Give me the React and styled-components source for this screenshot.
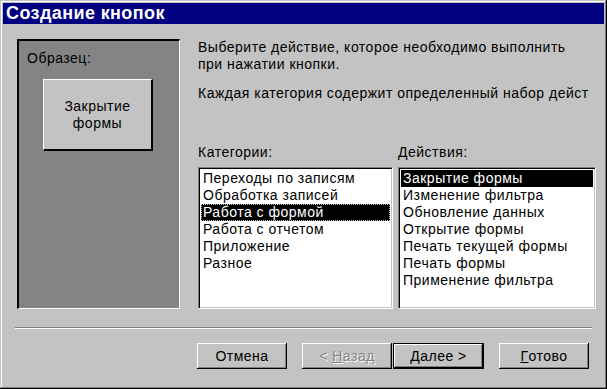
import styled, { createGlobalStyle } from "styled-components";

const Global = createGlobalStyle`
  html, body {
    margin: 0;
    padding: 0;
    background: #c0c0c0;
  }
  body {
    font-family: "Liberation Sans", Arial, sans-serif;
    font-size: 14px;
    color: #000;
  }
`;

const Window = styled.div`
  width: 607px;
  height: 389px;
  box-sizing: border-box;
  background: #c3c3c3;
  padding: 3px;
  letter-spacing: 0.5px;
  box-shadow: inset -1px -1px 0 #000, inset 1px 1px 0 #c3c3c3,
    inset -2px -2px 0 #808080, inset 2px 2px 0 #fff;
  display: flex;
  flex-direction: column;
  overflow: hidden;
`;

const TitleBar = styled.div`
  height: 21px;
  background: #000080;
  color: #fff;
  font-weight: bold;
  font-size: 18px;
  line-height: 21px;
  padding-left: 3px;
  letter-spacing: 0.4px;
`;

const Body = styled.div`
  display: flex;
  padding: 15px 0 0 14px;
`;

const SamplePanel = styled.div`
  width: 163px;
  height: 270px;
  box-sizing: border-box;
  background: #848484;
  border-top: 2px solid #000;
  border-left: 2px solid #000;
  border-right: 1px solid #fff;
  border-bottom: 1px solid #fff;
  padding: 9px 0 0 8px;
  display: flex;
  flex-direction: column;
`;

const SampleButton = styled.div`
  width: 110px;
  height: 72px;
  box-sizing: border-box;
  margin: 13px 0 0 16px;
  background: #c3c3c3;
  border-top: 1px solid #fff;
  border-left: 1px solid #fff;
  border-right: 2px solid #000;
  border-bottom: 2px solid #000;
  display: flex;
  align-items: center;
  justify-content: center;
  text-align: center;
  line-height: 17px;
`;

const Right = styled.div`
  margin-left: 18px;
  width: 398px;
  height: 270px;
  display: flex;
  flex-direction: column;
  line-height: 17px;
`;

const Para = styled.div`
  margin-top: ${({ $gap }) => $gap || 0}px;
  white-space: nowrap;
`;

const Lists = styled.div`
  margin-top: auto;
  display: flex;
  gap: 5px;
`;

const ListGroup = styled.div`
  display: flex;
  flex-direction: column;
  width: ${({ $w }) => $w}px;
`;

const Label = styled.div`
  height: 17px;
  margin-bottom: 6px;
`;

const ListBox = styled.div`
  height: 142px;
  box-sizing: border-box;
  background: #fff;
  border-top: 1px solid #808080;
  border-left: 1px solid #808080;
  border-right: 1px solid #fff;
  border-bottom: 1px solid #fff;
  box-shadow: inset 1px 1px 0 #000, inset -1px -1px 0 #c3c3c3;
  padding: 2px;
`;

const Item = styled.div`
  height: 17px;
  line-height: 17px;
  padding-left: 2px;
  white-space: nowrap;
  background: ${({ $sel }) => ($sel ? "#000" : "transparent")};
  color: ${({ $sel }) => ($sel ? "#fff" : "#000")};
  outline: ${({ $focus }) => ($focus ? "1px dotted #c3c3c3" : "none")};
  outline-offset: -1px;
`;

const Separator = styled.div`
  margin: 18px 12px 0 12px;
  height: 0;
  border-top: 1px solid #808080;
  border-bottom: 1px solid #fff;
`;

const Buttons = styled.div`
  display: flex;
  justify-content: flex-end;
  padding: 14px 15px 0 0;
`;

const Button = styled.div`
  width: ${({ $default }) => ($default ? 91 : 90)}px;
  height: 26px;
  box-sizing: border-box;
  margin-left: ${({ $ml }) => $ml}px;
  background: #c3c3c3;
  display: flex;
  align-items: center;
  justify-content: center;
  color: ${({ $disabled }) => ($disabled ? "#848484" : "#000")};
  text-shadow: ${({ $disabled }) => ($disabled ? "1px 1px 0 #fff" : "none")};
  border: ${({ $default }) => ($default ? "1px solid #000" : "0")};
  box-shadow: inset -1px -1px 0 #000, inset 1px 1px 0 #fff,
    inset -2px -2px 0 #808080;
  u {
    text-decoration: underline;
  }
`;

const categories = [
  "Переходы по записям",
  "Обработка записей",
  "Работа с формой",
  "Работа с отчетом",
  "Приложение",
  "Разное",
];

const actions = [
  "Закрытие формы",
  "Изменение фильтра",
  "Обновление данных",
  "Открытие формы",
  "Печать текущей формы",
  "Печать формы",
  "Применение фильтра",
];

export default function App() {
  return (
    <Window>
      <Global />
      <TitleBar>Создание кнопок</TitleBar>
      <Body>
        <SamplePanel>
          Образец:
          <SampleButton>
            Закрытие
            <br />
            формы
          </SampleButton>
        </SamplePanel>
        <Right>
          <Para>
            Выберите действие, которое необходимо выполнить
            <br />
            при нажатии кнопки.
          </Para>
          <Para $gap={12}>Каждая категория содержит определенный набор дейст</Para>
          <Lists>
            <ListGroup $w={195}>
              <Label>Категории:</Label>
              <ListBox>
                {categories.map((c) => (
                  <Item key={c} $sel={c === "Работа с формой"} $focus={c === "Работа с формой"}>
                    {c}
                  </Item>
                ))}
              </ListBox>
            </ListGroup>
            <ListGroup $w={198}>
              <Label>Действия:</Label>
              <ListBox>
                {actions.map((a, i) => (
                  <Item key={a} $sel={i === 0}>
                    {a}
                  </Item>
                ))}
              </ListBox>
            </ListGroup>
          </Lists>
        </Right>
      </Body>
      <Separator />
      <Buttons>
        <Button $ml={0}>Отмена</Button>
        <Button $ml={15} $disabled>
          &lt;&nbsp;<u>Н</u>азад
        </Button>
        <Button $ml={1} $default>
          <u>Д</u>алее&nbsp;&gt;
        </Button>
        <Button $ml={15}>
          <u>Г</u>отово
        </Button>
      </Buttons>
    </Window>
  );
}
